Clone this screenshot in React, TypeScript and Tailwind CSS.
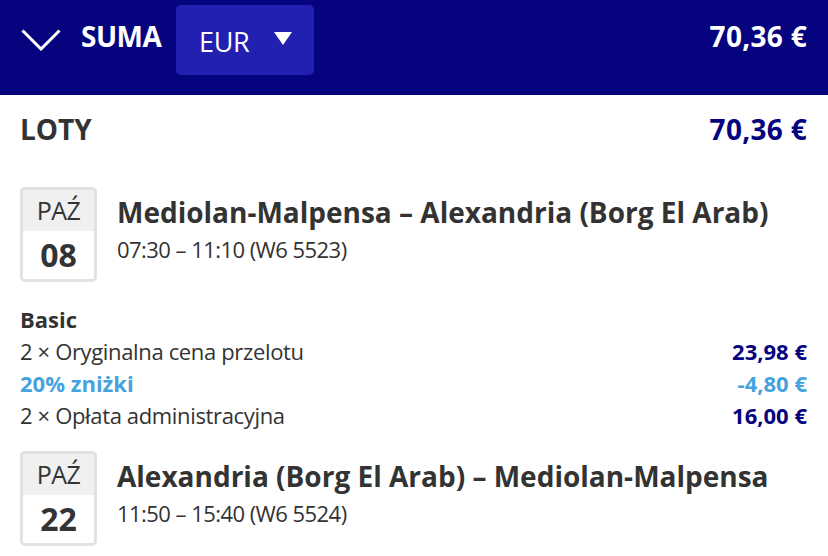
import React from "react";

const navy = "text-[#06037f]";
const sky = "text-[#45a3df]";

type Flight = {
  month: string;
  day: string;
  route: string;
  times: string;
};

const outbound: Flight = {
  month: "PAŹ",
  day: "08",
  route: "Mediolan-Malpensa – Alexandria (Borg El Arab)",
  times: "07:30 – 11:10 (W6 5523)",
};

const inbound: Flight = {
  month: "PAŹ",
  day: "22",
  route: "Alexandria (Borg El Arab) – Mediolan-Malpensa",
  times: "11:50 – 15:40 (W6 5524)",
};

const fareLines = [
  { label: "2 × Oryginalna cena przelotu", price: "23,98 €", discount: false },
  { label: "20% zniżki", price: "-4,80 €", discount: true },
  { label: "2 × Opłata administracyjna", price: "16,00 €", discount: false },
];

function FlightRow({ flight }: { flight: Flight }) {
  return (
    <div className="flex items-start gap-[20px]">
      {/* calendar chip */}
      <div className="w-[77px] h-[95px] shrink-0 rounded-[5px] border-[3px] border-[#e2e2e2] overflow-hidden flex flex-col">
        <div className="h-[41px] bg-[#f0f0f0] flex items-center justify-center text-[25px] leading-none text-[#333] tracking-[-0.5px]">
          {flight.month}
        </div>
        <div className="flex-1 bg-white flex items-center justify-center text-[32px] font-bold leading-none text-[#333]">
          {flight.day}
        </div>
      </div>
      <div className="pt-[7px]">
        <h3 className="text-[28px] font-bold leading-[36px] text-[#333] whitespace-nowrap">
          {flight.route}
        </h3>
        <p className="mt-[4px] text-[22px] leading-[30px] tracking-[-0.55px] text-[#333]">
          {flight.times}
        </p>
      </div>
    </div>
  );
}

export default function App() {
  return (
    <div
      className="w-[828px] h-[556px] overflow-hidden bg-white"
      style={{ fontFamily: "'Open Sans', 'Noto Sans', sans-serif" }}
    >
      {/* summary bar */}
      <header className="bg-[#06037f] pt-[5px] pb-[20px] pl-[21px] pr-[21px]">
        <div className="h-[70px] flex items-center">
          <svg width="40" height="22" viewBox="0 0 40 22" className="shrink-0">
            <path d="M1.5 1.5 L20 20 L38.5 1.5" fill="none" stroke="white" strokeWidth="3" />
          </svg>
          <span className="ml-[20px] w-[95px] text-[28px] font-bold text-white leading-none pb-[8px] tracking-[-0.5px]">
            SUMA
          </span>
          <button className="w-[138px] h-[70px] rounded-[5px] bg-[#2220b0] flex items-center pl-[23px] pr-[22px] justify-between">
            <span className="text-[27px] text-white leading-none pt-[2px] tracking-[-0.3px]">EUR</span>
            <svg width="18" height="13" viewBox="0 0 18 13" className="mb-[3px]">
              <path d="M0 0 H18 L9 13 Z" fill="white" />
            </svg>
          </button>
          <span className="ml-auto text-[28px] font-bold text-white leading-none pb-[8px] tracking-[0.3px]">
            70,36 €
          </span>
        </div>
      </header>

      <main className="pl-[20px] pr-[21px]">
        <div className="flex items-baseline justify-between pt-[20px] leading-[28px] text-[28px] font-bold">
          <h2 className="text-[#333]">LOTY</h2>
          <span className={`${navy} tracking-[0.3px]`}>70,36 €</span>
        </div>

        <div className="mt-[44px]">
          <FlightRow flight={outbound} />
        </div>

        <div className="mt-[21px] text-[22px] leading-[32px] text-[#333]">
          <div className="font-bold">Basic</div>
          {fareLines.map((line) => (
            <div key={line.label} className="flex justify-between">
              <span className={line.discount ? `font-bold ${sky}` : "tracking-[-0.35px]"}>{line.label}</span>
              <span className={`font-bold ${line.discount ? sky : navy}`}>{line.price}</span>
            </div>
          ))}
        </div>

        <div className="mt-[20px]">
          <FlightRow flight={inbound} />
        </div>
      </main>
    </div>
  );
}
